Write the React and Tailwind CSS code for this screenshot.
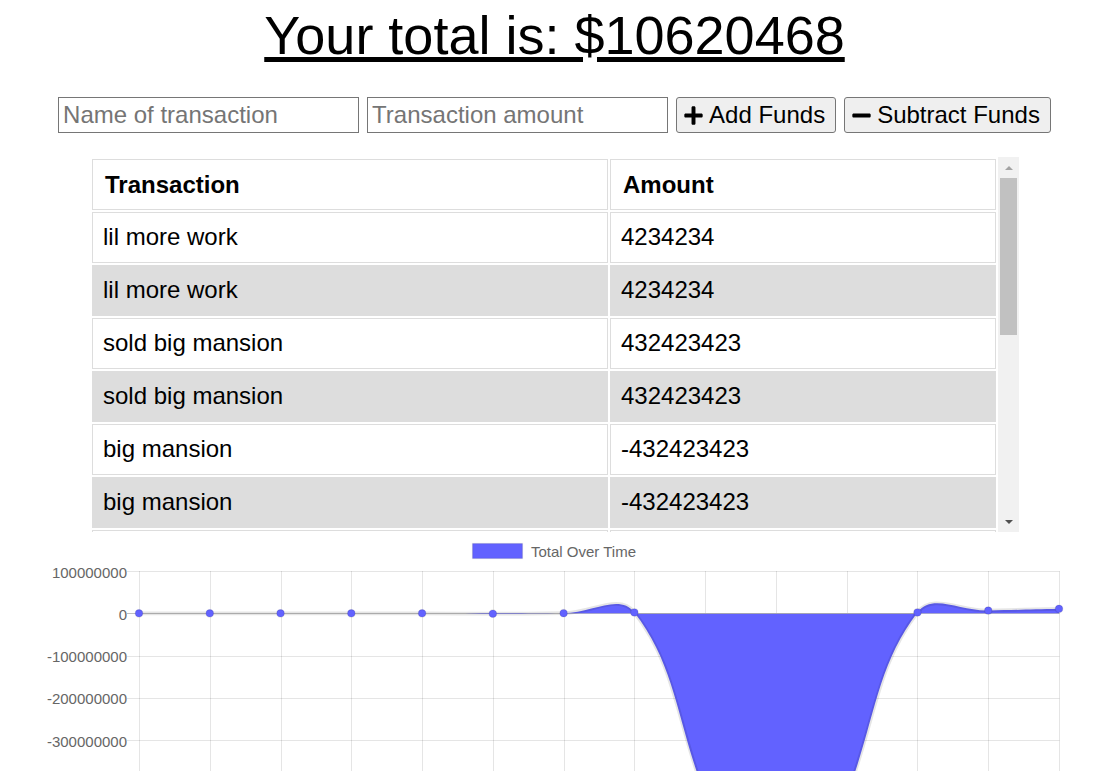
import React from "react";
import { FaPlus, FaMinus } from "react-icons/fa";

const rows = [
  ["lil more work", "4234234"],
  ["lil more work", "4234234"],
  ["sold big mansion", "432423423"],
  ["sold big mansion", "432423423"],
  ["big mansion", "-432423423"],
  ["big mansion", "-432423423"],
  ["bonus", "2002000"],
  ["side gig", "1150000"],
  ["new car", "-1002200"],
  ["groceries", "-1000"],
  ["freelance", "2000"],
  ["lunch", "-300"],
  ["allowance", "500"],
  ["first deposit", "1000"],
];

const X0 = 139;
const X1 = 1059;
const ZERO = 613.3;
const STEP = 42.3;
const PER = STEP / 1e8;
const TOP = ZERO - STEP;
const BOTTOM = ZERO + 9 * STEP;
const BLUE = "#6262ff";

function buildPoints() {
  const vals = rows.map((r) => Number(r[1])).reverse();
  let s = 0;
  return vals.map((v, i) => {
    s += v;
    return { x: X0 + (i * (X1 - X0)) / (vals.length - 1), y: ZERO - s * PER };
  });
}

function controls(pts, t = 0.4) {
  const cx = (x) => Math.min(Math.max(x, X0), X1);
  const cy = (y) => Math.min(Math.max(y, TOP), BOTTOM);
  return pts.map((cur, i) => {
    const prev = pts[i - 1] || cur;
    const next = pts[i + 1] || cur;
    const d01 = Math.hypot(cur.x - prev.x, cur.y - prev.y);
    const d12 = Math.hypot(next.x - cur.x, next.y - cur.y);
    let s01 = d01 / (d01 + d12);
    let s12 = d12 / (d01 + d12);
    if (isNaN(s01)) s01 = 0;
    if (isNaN(s12)) s12 = 0;
    const fa = t * s01;
    const fb = t * s12;
    return {
      px: cx(cur.x - fa * (next.x - prev.x)),
      py: cy(cur.y - fa * (next.y - prev.y)),
      nx: cx(cur.x + fb * (next.x - prev.x)),
      ny: cy(cur.y + fb * (next.y - prev.y)),
    };
  });
}

function Chart() {
  const pts = buildPoints();
  const c = controls(pts);
  let d = `M ${pts[0].x} ${pts[0].y}`;
  for (let i = 1; i < pts.length; i++) {
    d += ` C ${c[i - 1].nx} ${c[i - 1].ny} ${c[i].px} ${c[i].py} ${pts[i].x} ${pts[i].y}`;
  }
  const fill = `${d} L ${pts[pts.length - 1].x} ${ZERO} L ${pts[0].x} ${ZERO} Z`;
  const labels = [];
  for (let k = 0; k <= 10; k++) {
    const v = 100000000 - k * 100000000;
    labels.push({ y: TOP + k * STEP, text: String(v) });
  }
  const font = "'Liberation Sans', Arial, sans-serif";
  const zy = Math.round(ZERO) + 0.5;
  return (
    <svg width="1102" height="560" viewBox="0 532 1102 560" className="block">
      <rect x="472.5" y="543.5" width="50" height="15" fill={BLUE} stroke="rgba(0,0,0,0.1)" strokeWidth="1.25" />
      <text x="531" y="551" fontSize="15" fill="#666" fontFamily={font} dominantBaseline="central">
        Total Over Time
      </text>
      {labels.map((l, k) => (
        <g key={k}>
          <line
            x1="127"
            x2={X1 + 0.5}
            y1={Math.round(l.y) + 0.5}
            y2={Math.round(l.y) + 0.5}
            stroke={l.text === "0" ? "rgba(0,0,0,0.25)" : "rgba(0,0,0,0.1)"}
            strokeWidth="1"
          />
          <text x="127" y={l.y + 1} fontSize="15" fill="#666" fontFamily={font} textAnchor="end" dominantBaseline="central">
            {l.text}
          </text>
        </g>
      ))}
      {pts.map((p, i) => (
        <line
          key={i}
          x1={Math.round(p.x) + 0.5}
          x2={Math.round(p.x) + 0.5}
          y1={TOP}
          y2={BOTTOM + 12}
          stroke="rgba(0,0,0,0.1)"
          strokeWidth="1"
        />
      ))}
      <path d={fill} fill={BLUE} />
      <line x1={pts[7].x} x2={pts[11].x} y1={zy} y2={zy} stroke="#a4a4b4" strokeWidth="1" />
      <path d={d} fill="none" stroke="rgba(0,0,0,0.1)" strokeWidth="3.75" />
      {pts.map((p, i) => (
        <circle key={i} cx={p.x} cy={p.y} r="3.75" fill={BLUE} stroke="rgba(0,0,0,0.1)" strokeWidth="1.25" />
      ))}
    </svg>
  );
}

function FakeScrollbar() {
  return (
    <div className="w-[21px] h-full flex flex-col bg-[#f1f1f1]">
      <div className="h-[21px] flex items-center justify-center">
        <div className="w-0 h-0 border-x-[4px] border-x-transparent border-b-[4px] border-b-[#a3a3a3]" />
      </div>
      <div className="flex-1">
        <div className="mx-[2px] h-[157px] bg-[#c1c1c1]" />
      </div>
      <div className="h-[21px] flex items-center justify-center">
        <div className="w-0 h-0 border-x-[4px] border-x-transparent border-t-[4px] border-t-[#505050]" />
      </div>
    </div>
  );
}

export default function App() {
  return (
    <div className="w-[1102px] h-[771px] overflow-hidden bg-white text-black font-['Liberation_Sans',Arial,sans-serif]">
      <div className="ml-[7px]">
        <h1 className="pt-[4px] text-center text-[54px] leading-[62px] underline">Your total is: $10620468</h1>
        <div className="mt-[31px] flex justify-center gap-[8px] text-[24px]">
          <input
            placeholder="Name of transaction"
            className="w-[301px] h-[36px] border border-[#767676] px-[4px] text-[24px] placeholder:text-[#757575] outline-none"
          />
          <input
            placeholder="Transaction amount"
            className="w-[301px] h-[36px] border border-[#767676] px-[4px] text-[24px] placeholder:text-[#757575] outline-none"
          />
          <button className="flex items-center gap-[5px] h-[36px] pl-[6px] pr-[10px] border border-[#767676] rounded-[3px] bg-[#efefef] text-[24px] leading-none">
            <FaPlus size={21} />
            <span>Add Funds</span>
          </button>
          <button className="flex items-center gap-[5px] h-[36px] pl-[6px] pr-[10px] border border-[#767676] rounded-[3px] bg-[#efefef] text-[24px] leading-none">
            <FaMinus size={21} />
            <span>Subtract Funds</span>
          </button>
        </div>
      </div>
      <div className="mt-[24px] ml-[90px] w-[929px] h-[375px] flex">
        <div className="w-[908px] h-full overflow-hidden">
          <table className="w-[908px] table-fixed border-separate border-spacing-[2px] text-[24px]">
            <thead>
              <tr>
                <th className="w-[516px] border border-[#dddddd] pl-[12px] py-[10px] leading-[29px] text-left font-bold">Transaction</th>
                <th className="w-[386px] border border-[#dddddd] pl-[12px] py-[10px] leading-[29px] text-left font-bold">Amount</th>
              </tr>
            </thead>
            <tbody>
              {rows.map((r, i) => (
                <tr key={i} className={i % 2 === 1 ? "bg-[#dddddd]" : "bg-white"}>
                  <td className="border border-[#dddddd] pl-[10px] pt-[9px] pb-[11px] leading-[29px]">{r[0]}</td>
                  <td className="border border-[#dddddd] pl-[10px] pt-[9px] pb-[11px] leading-[29px]">{r[1]}</td>
                </tr>
              ))}
            </tbody>
          </table>
        </div>
        <FakeScrollbar />
      </div>
      <Chart />
    </div>
  );
}
